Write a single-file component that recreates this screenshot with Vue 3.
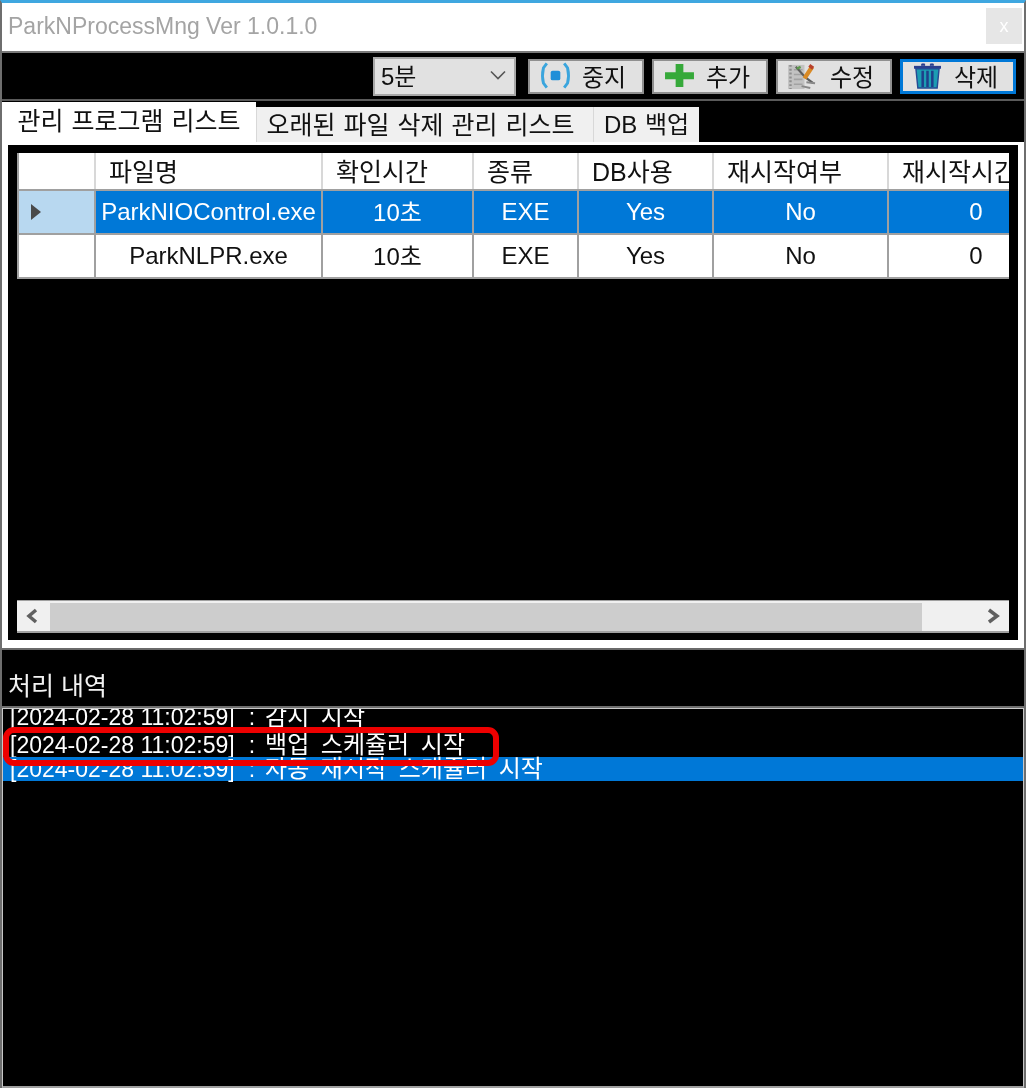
<script setup>
const buttons = [
  { label: '중지', icon: 'stop' },
  { label: '추가', icon: 'add' },
  { label: '수정', icon: 'edit' },
  { label: '삭제', icon: 'trash', focused: true },
]
const tabs = [
  { label: '관리 프로그램 리스트', cls: 'tab-active' },
  { label: '오래된 파일 삭제 관리 리스트', cls: 'tab-second' },
  { label: 'DB 백업', cls: 'tab-third' },
]
const columns = ['파일명', '확인시간', '종류', 'DB사용', '재시작여부', '재시작시간']
const rows = [
  { cells: ['ParkNIOControl.exe', '10초', 'EXE', 'Yes', 'No', '0'], selected: true },
  { cells: ['ParkNLPR.exe', '10초', 'EXE', 'Yes', 'No', '0'], selected: false },
]
const logs = [
  { time: '[2024-02-28 11:02:59]', msg: '감시 시작', selected: false },
  { time: '[2024-02-28 11:02:59]', msg: '백업 스케쥴러 시작', selected: false },
  { time: '[2024-02-28 11:02:59]', msg: '자동 재시작 스케쥴러 시작', selected: true },
]
</script>

<template>
  <div class="window">
    <header class="titlebar">
      <span class="title">ParkNProcessMng Ver 1.0.1.0</span>
      <span class="close">x</span>
    </header>

    <section class="toolbar">
      <div class="select">
        <span>5분</span>
        <svg class="chevron" viewBox="0 0 16 10"><path d="M1 1.5l7 7 7-7" fill="none" stroke="#555" stroke-width="1.6" /></svg>
      </div>
      <button v-for="b in buttons" :key="b.label" class="btn" :class="{ focused: b.focused }">
        <svg class="icon" viewBox="0 0 32 28">
          <template v-if="b.icon === 'stop'">
            <path d="M7 1.5L3.5 6Q1.5 14 3.5 22L7 26.5" fill="none" stroke="#3aa5dd" stroke-width="3" />
            <path d="M25 1.5L28.5 6Q30.5 14 28.5 22L25 26.5" fill="none" stroke="#3aa5dd" stroke-width="3" />
            <rect x="11" y="9" width="10" height="10" rx="2" fill="#1f8fd8" />
          </template>
          <template v-else-if="b.icon === 'add'">
            <path d="M12 2h8v8.500h11v7.500H20v8h-8v-8H1v-7.500h11z" fill="#36a93a" />
          </template>
          <template v-else-if="b.icon === 'edit'">
            <rect x="0" y="3" width="17" height="25" fill="#c2c2c2" />
            <path d="M2.500 3v25" stroke="#8f8f8f" stroke-width="2.500" stroke-dasharray="2 2" />
            <path d="M6 8h9M6 13h9M6 18h9M6 23h9" stroke="#a2a2a2" stroke-width="1.600" />
            <path d="M8 5l10 11 8 6" fill="none" stroke="#5d5d5d" stroke-width="2.200" />
            <path d="M17 17L25 5" stroke="#d98a25" stroke-width="4.500" />
            <path d="M23 2l4 3-2 3-4-3z" fill="#b8402a" />
            <path d="M9 7l4-2" stroke="#5c9a4a" stroke-width="2.500" />
            <path d="M19 21l9 1M14 25l9 2" stroke="#888" stroke-width="2" />
          </template>
          <template v-else>
            <path d="M2 4h28v3H2z" fill="#2b3f8f" />
            <path d="M10 4V2h3v2M19 4V2h3v2" fill="#2b3f8f" stroke="#2b3f8f" />
            <path d="M4 7h24l-2 20H6z" fill="#1c9db3" stroke="#254b94" stroke-width="1.500" />
            <path d="M11 9v17M16 9v17M21 9v17" stroke="#1f3f8a" stroke-width="2.600" />
          </template>
        </svg>
        <span>{{ b.label }}</span>
      </button>
    </section>

    <nav class="tabs">
      <div v-for="t in tabs" :key="t.label" class="tab" :class="t.cls">{{ t.label }}</div>
    </nav>

    <section class="panel">
      <div class="panel-inner">
        <div class="grid">
          <div class="grid-row grid-head">
            <div class="cell rowhead"></div>
            <div v-for="(c, i) in columns" :key="c" class="cell" :class="'c' + i">{{ c }}</div>
          </div>
          <div v-for="(r, ri) in rows" :key="ri" class="grid-row grid-body" :class="{ selected: r.selected }">
            <div class="cell rowhead">
              <svg v-if="r.selected" class="arrow" viewBox="0 0 12 18"><path d="M1 1l10 8-10 8z" fill="#4a4a4a" /></svg>
            </div>
            <div v-for="(c, i) in r.cells" :key="i" class="cell" :class="'c' + i">{{ c }}</div>
          </div>
        </div>
        <div class="spacer"></div>
        <div class="scrollbar">
          <svg class="sb-arrow sb-left" viewBox="0 0 12 16"><path d="M10 2L3 8l7 6" fill="none" stroke="#606060" stroke-width="3.5" /></svg>
          <div class="sb-track"><div class="sb-thumb"></div></div>
          <svg class="sb-arrow sb-right" viewBox="0 0 12 16"><path d="M1 2l8 6-8 6" fill="none" stroke="#606060" stroke-width="3.5" /></svg>
        </div>
      </div>
    </section>

    <section class="history-head">처리 내역</section>

    <section class="log">
      <div class="log-list">
        <div v-for="(l, i) in logs" :key="i" class="log-row" :class="{ 'log-selected': l.selected, 'log-first': i === 0 }">
          <span class="log-time">{{ l.time }}</span><span class="log-sep">:</span><span class="log-msg">{{ l.msg }}</span>
        </div>
      </div>
      <div class="marker"></div>
    </section>
  </div>
</template>

<style>
html, body { margin: 0; background: #000; }
</style>

<style scoped>
.window {
  width: 1026px;
  height: 1088px;
  box-sizing: border-box;
  display: flex;
  flex-direction: column;
  background: #000;
  border-top: 3px solid #3fa7e0;
  border-left: 2px solid #6e6e6e;
  border-right: 2px solid #6e6e6e;
  font-family: "Liberation Sans", "Noto Sans CJK KR", sans-serif;
  font-size: 24px;
  overflow: hidden;
  filter: blur(0.45px);
}
.titlebar {
  height: 50px;
  box-sizing: border-box;
  background: #fff;
  display: flex;
  align-items: center;
  justify-content: space-between;
  padding: 0 2px 2px 6px;
  border-bottom: 2px solid #7a7a7a;
  flex: none;
}
.title { color: #a4a4a4; font-size: 23px; }
.close {
  width: 36px;
  height: 36px;
  background: #e6e6e6;
  color: #fff;
  display: flex;
  align-items: center;
  justify-content: center;
  font-size: 18px;
}
.toolbar {
  height: 48px;
  box-sizing: border-box;
  flex: none;
  display: flex;
  align-items: center;
  justify-content: flex-end;
  gap: 8px;
  padding: 0 8px 0 0;
  border-bottom: 2px solid #5a5a5a;
}
.select {
  width: 143px;
  height: 39px;
  box-sizing: border-box;
  background: #e1e1e1;
  border: 2px solid #a8a8a8;
  display: flex;
  align-items: center;
  justify-content: space-between;
  padding: 0 8px 3px 6px;
  margin-right: 4px;
  color: #111;
}
.chevron { width: 16px; height: 10px; }
.btn {
  width: 116px;
  height: 35px;
  box-sizing: border-box;
  background: #e1e1e1;
  border: 2px solid #8f8f8f;
  display: flex;
  align-items: center;
  justify-content: center;
  gap: 11px;
  padding: 0 6px 2px 0;
  color: #111;
  font: inherit;
}
.btn.focused { border: 3px solid #0078d7; }
.icon { width: 31px; height: 27px; flex: none; }
.tabs {
  height: 41px;
  flex: none;
  display: flex;
  align-items: flex-end;
  font-size: 25px;
  word-spacing: 1px;
}
.tab {
  box-sizing: border-box;
  display: flex;
  align-items: center;
  justify-content: center;
  color: #111;
  white-space: nowrap;
}
.tab-active { width: 254px; height: 40px; background: #fff; padding-bottom: 6px; }
.tab-second { width: 337px; height: 35px; background: #f0f0f0; border-left: 1px solid #d8d8d8; padding: 0 9px 4px 0; }
.tab-third { width: 106px; height: 35px; background: #f0f0f0; border-left: 1px solid #d8d8d8; padding-bottom: 4px; font-size: 24px; }
.panel {
  height: 508px;
  flex: none;
  box-sizing: border-box;
  background: #fff;
  padding: 3px 6px 8px 6px;
  border-bottom: 2px solid #6a6a6a;
}
.panel-inner {
  height: 100%;
  box-sizing: border-box;
  background: #000;
  padding: 8px 9px 7px 9px;
  display: flex;
  flex-direction: column;
  overflow: hidden;
}
.grid { display: flex; flex-direction: column; flex: none; background: #a0a0a0; padding: 0 0 0 2px; }
.grid-row { display: flex; overflow: hidden; }
.grid-head { height: 38px; box-sizing: border-box; background: #fff; border-bottom: 2px solid #a0a0a0; font-size: 25px; }
.grid-body { height: 44px; box-sizing: border-box; background: #fff; border-bottom: 2px solid #a0a0a0; }
.cell {
  box-sizing: border-box;
  flex: none;
  display: flex;
  align-items: center;
  justify-content: center;
  border-right: 2px solid #a0a0a0;
  color: #111;
  white-space: nowrap;
  overflow: hidden;
}
.grid-head .cell { border-right-color: #d8d8d8; justify-content: flex-start; padding-left: 13px; padding-bottom: 2px; }
.grid-body .c1 { padding-bottom: 4px; }
.rowhead { width: 77px; }
.selected .rowhead { background: #b8d8f0; }
.selected .cell:not(.rowhead) { background: #0078d7; color: #fff; }
.c0 { width: 227px; }
.c1 { width: 151px; }
.c2 { width: 105px; }
.c3 { width: 135px; }
.c4 { width: 175px; }
.c5 { width: 174px; border-right: 0; }
.arrow { width: 12px; height: 18px; margin-right: 42px; }
.spacer { flex: 1; }
.scrollbar {
  height: 33px;
  flex: none;
  box-sizing: border-box;
  background: #f0f0f0;
  border-top: 1px solid #a0a0a0;
  border-bottom: 2px solid #a0a0a0;
  display: flex;
  align-items: center;
}
.sb-arrow { width: 12px; height: 16px; flex: none; }
.sb-left { margin: 0 12px 0 9px; }
.sb-right { margin: 0 9px 0 0; }
.sb-track { flex: 1; height: 100%; padding: 2px 0 0; box-sizing: border-box; }
.sb-thumb { width: 872px; height: 100%; background: #cdcdcd; }
.history-head {
  height: 58px;
  flex: none;
  box-sizing: border-box;
  color: #f2f2f2;
  font-size: 25px;
  padding: 16px 0 0 6px;
  border-bottom: 2px solid #6e6e6e;
}
.log {
  position: relative;
  flex: 1;
  min-height: 0;
  border: 1px solid #c8c8c8;
  border-bottom: 2px solid #a0a0a0;
  overflow: hidden;
}
.log-list { display: flex; flex-direction: column; font-size: 23px; }
.log-row { height: 24px; line-height: 24px; padding-left: 7px; color: #fff; white-space: nowrap; }
.log-first { margin-top: -5px; height: 29px; line-height: 26px; }
.log-selected { background: #0078d7; }
.log-sep { margin-left: 14px; }
.log-msg { margin-left: 10px; font-size: 24px; word-spacing: 5px; }
.marker {
  position: absolute;
  left: 0;
  top: 18px;
  width: 496px;
  height: 39px;
  box-sizing: border-box;
  border: 6px solid #ee0000;
  border-radius: 11px;
}
</style>
